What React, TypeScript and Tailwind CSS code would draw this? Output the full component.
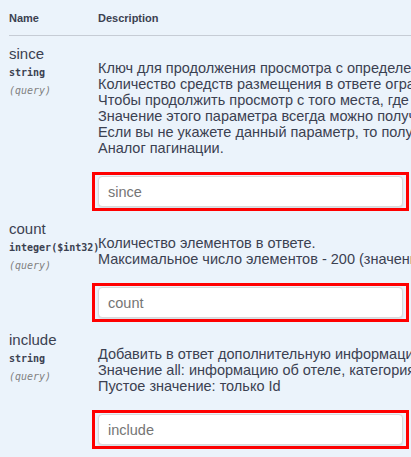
type Param = {
  name: string;
  type: string;
  lines: string[];
};

const params: Param[] = [
  {
    name: 'since',
    type: 'string',
    lines: [
      'Ключ для продолжения просмотра с определенного места в списке.',
      'Количество средств размещения в ответе ограничено.',
      'Чтобы продолжить просмотр с того места, где закончился предыдущий ответ, передайте этот ключ.',
      'Значение этого параметра всегда можно получить из предыдущего ответа.',
      'Если вы не укажете данный параметр, то получите первую страницу.',
      'Аналог пагинации.',
    ],
  },
  {
    name: 'count',
    type: 'integer($int32)',
    lines: [
      'Количество элементов в ответе.',
      'Максимальное число элементов - 200 (значение по умолчанию).',
    ],
  },
  {
    name: 'include',
    type: 'string',
    lines: [
      'Добавить в ответ дополнительную информацию.',
      'Значение all: информацию об отеле, категориях номеров и тарифах.',
      'Пустое значение: только Id',
    ],
  },
];

function ParamRow({ p }: { p: Param }) {
  return (
    <div className="flex pt-[9px]">
      <div className="w-[89px] shrink-0">
        <div className="text-[15px] leading-[18px]">{p.name}</div>
        <div className="mt-[1px] font-['DejaVu_Sans_Mono',monospace] text-[10px] font-bold leading-[18px] whitespace-nowrap">
          {p.type}
        </div>
        <div className="font-['DejaVu_Sans_Mono',monospace] text-[10px] italic leading-[17px] text-[#808080]">
          (query)
        </div>
      </div>
      <div className="min-w-0 flex-1">
        {/* long descriptions run past the panel edge */}
        <div className="mt-[15px] text-[14.5px] leading-4 whitespace-nowrap">
          {p.lines.map((l) => (
            <div key={l}>{l}</div>
          ))}
        </div>
        <div className="mt-4 -ml-[6px] w-[317px] border-[3px] border-[#ff0000] px-[3px] py-px">
          <input
            placeholder={p.name}
            className="h-[31px] w-[305px] rounded-[4px] border border-[#d9d9d9] bg-white px-[9px] text-[14.5px] text-[#3b4151] shadow-[0_1px_2px_rgba(0,0,0,0.1)] outline-none placeholder:text-[#757575]"
          />
        </div>
      </div>
    </div>
  );
}

export default function App() {
  return (
    <div className="min-h-[457px] w-[411px] overflow-hidden bg-[#ebf3fb] pl-[9px] font-['Liberation_Sans',Arial,sans-serif] text-[#3b4151]">
      <div className="flex border-b border-[#c6ccd5] pt-[12px] pb-[10px] text-[11px] font-bold leading-[13px]">
        <div className="w-[89px]">Name</div>
        <div>Description</div>
      </div>
      {params.map((p) => (
        <ParamRow key={p.name} p={p} />
      ))}
    </div>
  );
}
